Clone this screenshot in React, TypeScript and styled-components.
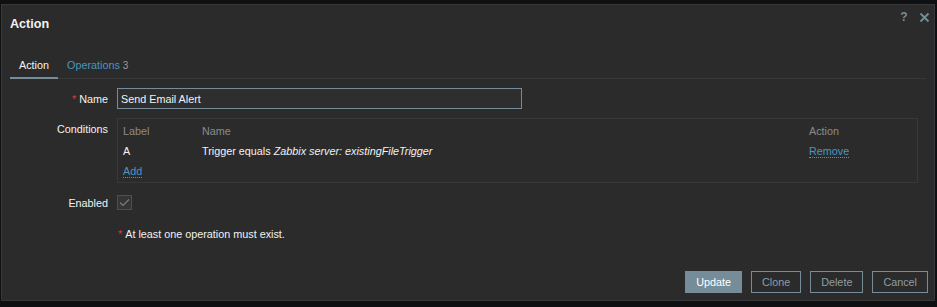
import React from 'react';
import styled, { createGlobalStyle } from 'styled-components';

const GlobalStyle = createGlobalStyle`
  html, body {
    margin: 0;
    padding: 0;
    background: #0e1012;
  }
  body {
    font-family: "Liberation Sans", Arial, sans-serif;
    font-size: 10.8px;
    color: #f2f2f2;
  }
`;

const Dialog = styled.div`
  box-sizing: border-box;
  display: flex;
  flex-direction: column;
  width: 934px;
  height: 297px;
  margin: 4px 0 0 1px;
  background: #2b2b2b;
  border: 1px solid #383838;
`;

const Header = styled.div`
  display: flex;
  align-items: center;
  height: 36px;
  padding: 0 8px;
`;

const Title = styled.h4`
  flex: 1;
  margin: 0;
  padding-top: 2px;
  font-size: 12.6px;
  font-weight: bold;
  color: #f2f2f2;
`;

const HeaderIcons = styled.div`
  display: flex;
  align-items: center;
  gap: 8px;
  align-self: flex-start;
  margin-top: 4px;
  margin-right: -4px;
`;

const IconButton = styled.button`
  display: flex;
  align-items: center;
  justify-content: center;
  padding: 0;
  width: 12px;
  height: 16px;
  border: 0;
  background: transparent;
  color: #768d99;
  font-family: "Liberation Sans", Arial, sans-serif;
  font-size: 12px;
  font-weight: bold;
  cursor: pointer;
`;

const Body = styled.div`
  padding: 0 8px;
`;

const TabsNav = styled.ul`
  display: flex;
  margin: 10px 0 0;
  padding: 0;
  list-style: none;
  box-shadow: inset 0 -1px 0 #383838;
`;

const Tab = styled.li<{ $active?: boolean }>`
  padding: 7px 9px 4px;
  line-height: 14px;
  border-bottom: 2px solid ${(p) => (p.$active ? '#768d99' : 'transparent')};
  color: ${(p) => (p.$active ? '#f2f2f2' : '#4796c4')};
`;

const TabCount = styled.span`
  color: #999999;
  margin-left: 3px;
  font-size: 10px;
`;

const Form = styled.div`
  display: grid;
  grid-template-columns: 98px 801px;
  column-gap: 9px;
  row-gap: 9px;
  margin-top: 9px;
`;

const Label = styled.label<{ $top?: boolean }>`
  display: flex;
  align-items: ${(p) => (p.$top ? 'flex-start' : 'center')};
  justify-content: flex-end;
  padding-top: ${(p) => (p.$top ? '4px' : '0')};
  color: #f2f2f2;
  line-height: 14px;
`;

const Asterisk = styled.span`
  color: #e33734;
  margin-right: 3px;
`;

const Field = styled.div<{ $offset?: number }>`
  display: flex;
  align-items: center;
  min-height: 21px;
  margin-top: ${(p) => p.$offset ?? 0}px;
`;

const TextInput = styled.input`
  box-sizing: border-box;
  width: 405px;
  height: 21px;
  padding: 0 3px;
  background: #2e2e2e;
  border: 1px solid #768d99;
  color: #f2f2f2;
  font-family: "Liberation Sans", Arial, sans-serif;
  font-size: 10.8px;
  outline: none;
`;

const ConditionsTable = styled.div`
  box-sizing: border-box;
  width: 801px;
  padding: 2px 5px 1px;
  border: 1px solid #383838;
  display: grid;
  grid-template-columns: 79px 1fr 103px;
  grid-auto-rows: 20px;
  align-items: center;
`;

const HeadCell = styled.div`
  color: #8c8c8c;
`;

const Cell = styled.div`
  color: #f2f2f2;
`;

const Italic = styled.i`
  font-style: italic;
`;

const LinkText = styled.a`
  color: #4796c4;
  text-decoration: none;
  border-bottom: 1px dotted #4796c4;
  cursor: pointer;
`;

const Checkbox = styled.span`
  box-sizing: border-box;
  display: flex;
  align-items: center;
  justify-content: center;
  width: 15px;
  height: 15px;
  background: #353535;
  border: 1px solid #4f4f4f;
`;

const Message = styled.div`
  line-height: 14px;
  color: #f2f2f2;
  padding-left: 1px;
`;

const Footer = styled.div`
  display: flex;
  justify-content: flex-end;
  gap: 9px;
  margin-top: auto;
  padding: 0 6px 7px;
`;

const Button = styled.button<{ $primary?: boolean }>`
  box-sizing: border-box;
  height: 22px;
  padding: 0 10px;
  font-family: "Liberation Sans", Arial, sans-serif;
  font-size: 10.8px;
  border: 1px solid #768d99;
  background: ${(p) => (p.$primary ? '#768d99' : 'transparent')};
  color: ${(p) => (p.$primary ? '#ffffff' : '#8e9ea7')};
  cursor: pointer;
`;

const CloseIcon = () => (
  <svg width="11" height="11" viewBox="0 0 11 11">
    <path d="M1.5 1.5 L9.5 9.5 M9.5 1.5 L1.5 9.5" stroke="#768d99" strokeWidth="1.8" />
  </svg>
);

const CheckIcon = () => (
  <svg width="11" height="9" viewBox="0 0 11 9">
    <path d="M1 4.5 L4 7.5 L10 1.5" fill="none" stroke="#7a7a7a" strokeWidth="1.2" />
  </svg>
);

export default function App() {
  return (
    <>
      <GlobalStyle />
      <Dialog>
        <Header>
          <Title>Action</Title>
          <HeaderIcons>
            <IconButton title="Help">?</IconButton>
            <IconButton title="Close">
              <CloseIcon />
            </IconButton>
          </HeaderIcons>
        </Header>
        <Body>
          <TabsNav>
            <Tab $active>Action</Tab>
            <Tab>
              Operations<TabCount>3</TabCount>
            </Tab>
          </TabsNav>
          <Form>
            <Label>
              <Asterisk>*</Asterisk>Name
            </Label>
            <Field>
              <TextInput defaultValue="Send Email Alert" />
            </Field>

            <Label $top>Conditions</Label>
            <Field>
              <ConditionsTable>
                <HeadCell>Label</HeadCell>
                <HeadCell>Name</HeadCell>
                <HeadCell>Action</HeadCell>
                <Cell>A</Cell>
                <Cell>
                  Trigger equals <Italic>Zabbix server: existingFileTrigger</Italic>
                </Cell>
                <Cell>
                  <LinkText>Remove</LinkText>
                </Cell>
                <Cell>
                  <LinkText>Add</LinkText>
                </Cell>
              </ConditionsTable>
            </Field>

            <Label>Enabled</Label>
            <Field>
              <Checkbox>
                <CheckIcon />
              </Checkbox>
            </Field>

            <div />
            <Field $offset={1}>
              <Message>
                <Asterisk>*</Asterisk>At least one operation must exist.
              </Message>
            </Field>
          </Form>
        </Body>
        <Footer>
          <Button $primary>Update</Button>
          <Button>Clone</Button>
          <Button>Delete</Button>
          <Button>Cancel</Button>
        </Footer>
      </Dialog>
    </>
  );
}
